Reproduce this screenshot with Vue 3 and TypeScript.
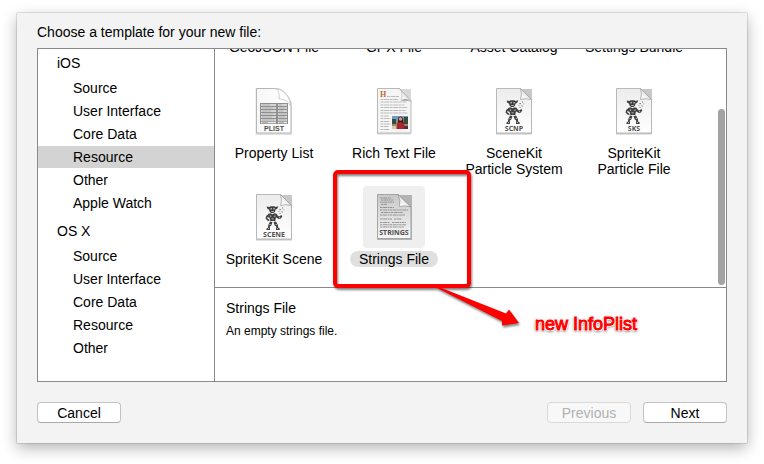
<script setup lang="ts">
import { computed, ref } from 'vue'

type IconKind = 'plain' | 'plist' | 'rtf' | 'figure' | 'strings'

interface Template {
  name: string
  kind: IconKind
  tag?: string
}

const groups = [
  { title: 'iOS', items: ['Source', 'User Interface', 'Core Data', 'Resource', 'Other', 'Apple Watch'] },
  { title: 'OS X', items: ['Source', 'User Interface', 'Core Data', 'Resource', 'Other'] },
]

const templates: Template[] = [
  { name: 'GeoJSON File', kind: 'plain' },
  { name: 'GPX File', kind: 'plain' },
  { name: 'Asset Catalog', kind: 'plain' },
  { name: 'Settings Bundle', kind: 'plain' },
  { name: 'Property List', kind: 'plist', tag: 'PLIST' },
  { name: 'Rich Text File', kind: 'rtf' },
  { name: 'SceneKit\nParticle System', kind: 'figure', tag: 'SCNP' },
  { name: 'SpriteKit\nParticle File', kind: 'figure', tag: 'SKS' },
  { name: 'SpriteKit Scene', kind: 'figure', tag: 'SCENE' },
  { name: 'Strings File', kind: 'strings', tag: 'STRINGS' },
]

const descriptions: Record<string, string> = {
  'Strings File': 'An empty strings file.',
}

const category = ref('iOS/Resource')
const selected = ref('Strings File')
const description = computed(() => descriptions[selected.value] ?? '')
</script>

<template>
  <main class="screen">
    <section class="dialog">
      <h1 class="heading">Choose a template for your new file:</h1>

      <div class="panel">
        <nav class="sidebar">
          <div v-for="group in groups" :key="group.title" class="group">
            <h2 class="group-title">{{ group.title }}</h2>
            <button
              v-for="item in group.items"
              :key="item"
              type="button"
              class="category"
              :class="{ active: category === group.title + '/' + item }"
              @click="category = group.title + '/' + item"
            >{{ item }}</button>
          </div>
        </nav>

        <div class="content">
          <div class="browser">
            <div class="grid">
              <button
                v-for="t in templates"
                :key="t.name"
                type="button"
                class="template"
                :class="{ selected: selected === t.name }"
                @click="selected = t.name"
              >
                <svg class="icon" viewBox="0 0 62 62" aria-hidden="true">
                  <defs>
                    <linearGradient id="paper" x1="0" y1="0" x2="0" y2="1">
                      <stop offset="0" stop-color="#ececec" />
                      <stop offset="1" stop-color="#ffffff" />
                    </linearGradient>
                    <linearGradient id="white" x1="0" y1="0" x2="1" y2="0">
                      <stop offset="0" stop-color="#f7f7f7" />
                      <stop offset="1" stop-color="#ffffff" />
                    </linearGradient>
                    <linearGradient id="gray" x1="0" y1="0" x2="0" y2="1">
                      <stop offset="0" stop-color="#c8c8c8" />
                      <stop offset="1" stop-color="#f6f6f6" />
                    </linearGradient>
                    <linearGradient id="fold" x1="0" y1="1" x2="1" y2="0">
                      <stop offset="0" stop-color="#ffffff" />
                      <stop offset="0.4" stop-color="#f0f0f0" />
                      <stop offset="1" stop-color="#9a9a9a" />
                    </linearGradient>
                  </defs>

                  <template v-if="t.kind === 'plist'">
                    <path d="M13.500 9h22q8 3 12.500 14v31h-34.500z" fill="none" stroke="#000" stroke-opacity=".12" stroke-width="2" />
                    <path d="M13.500 8.500h18c8 0 16.500 9 16.500 18v26.500h-34.500z" fill="url(#white)" stroke="#b5b5b5" />
                    <path d="M33 8.500q4 3 3 10.500 8-.5 11.500 7c0-9-7-16.500-14.500-17.500z" fill="#fdfdfd" stroke="#c4c4c4" stroke-width=".8" />
                    <rect x="17" y="23" width="28" height="21" fill="#8f8f8f" />
                    <path d="M18 25h15M35 25h9M18 28h15M35 28h9M18 31h15M35 31h9M18 34h15M35 34h9M18 37h15M35 37h9M18 40h15M35 40h9M18 42.500h15M35 42.500h9" stroke="#ececec" stroke-width="1.700" />
                    <path d="M19 25h8M36 25h3M19 28h11M36 28h6M19 31h9M36 31h4M19 34h11M36 34h7M19 37h10M36 37h6M19 40h12M36 40h7M19 42.500h6M36 42.500h5" stroke="#aaa" stroke-width=".8" />
                    <text x="31" y="51" class="tag tag-sans">{{ t.tag }}</text>
                  </template>

                  <template v-else-if="t.kind === 'rtf'">
                    <rect x="14" y="9" width="34" height="45.500" fill="#000" opacity=".15" />
                    <path d="M14.500 8.500h22l11.500 12v32.500h-33.500z" fill="#f5f5f5" stroke="#b8b8b8" />
                    <path d="M36.500 8.500c3 4 3 8 1.500 12q5-1.500 10 1z" fill="url(#fold)" stroke="#aaa" stroke-width=".5" />
                    <path d="M38 20.500q4-2.500 9 0z" fill="#444" opacity=".55" />
                    <text x="17" y="17" class="initial">H</text>
                    <path d="M24 16.500h12M17.500 19.500h18M17.500 22h26M17.500 25h24M17.500 27.500h27M17.500 30.500h25M17.500 33h27M17.500 36h8M17.500 38.500h10M17.500 41.500h9M17.500 44h10M17.500 46.500h8M17.500 49.500h9" stroke="#b4b4b4" stroke-width=".9" stroke-dasharray="3 .6 5 .5" />
                    <rect x="29" y="36" width="16" height="13" fill="#6f9bc9" />
                    <path d="M29 41h16v8h-16z" fill="#8c9072" />
                    <path d="M29 39h4v5h-4zM41 37h4v7h-4z" fill="#3a4b3c" />
                    <path d="M35 38q2.500-3 5 0l1 8h-6z" fill="#352019" />
                    <circle cx="37.500" cy="39" r="1.800" fill="#d99a77" />
                    <path d="M34 43l3-1 4 1 1 6h-8z" fill="#ad2431" />
                    <path d="M29 46h4v3h-4z" fill="#e7c3a3" />
                    <path d="M41 46h4v3h-4z" fill="#5b2e31" />
                  </template>

                  <template v-else-if="t.kind === 'figure'">
                    <rect x="13" y="9" width="36" height="45.500" fill="#000" opacity=".22" />
                    <path d="M13.500 8.500h24l11 11v33.500h-35z" fill="url(#paper)" stroke="#b8b8b8" />
                    <path d="M37.500 8.500q2 6 0 11 5-1.500 11 0z" fill="url(#fold)" stroke="#999" stroke-width=".7" />
                    <g fill="#404040">
                      <path d="M23.500 20.500l3 .5 1-.8h4l1 .8 3-.8-1.500 2.800-1.500.6-.5 2.200-1.500 1.200h-2.400l-1.500-1.200-.6-2.200-1.500-.6z" />
                      <path d="M25 28l2.500-.7 2 1 2-1 2.500.8.5 3-1.500.5-.7 3.400h-5l-.8-3.300-2-.5z" />
                      <path d="M33.500 28.500l2.500 2 2.500-1.500.8 1.200-1.300 2.300-2.500.5-2.500-2zM25.500 28.500l-2.300 1.300-.7 2.700 2.500 2.500h1.500l-.5-1.500-1.500-1.300z" />
                      <path d="M27 35.500l2.500.5-1.200 3.500-1.500 1 .2 3.500h-3.500v-1.500l1.500-1 .2-2.300zM33 35.500l-2.500.5 1.200 3.500 1.500 1-.2 3.500h3.700v-1.500l-1.500-1-.2-2.300z" />
                    </g>
                    <path d="M36.500 23h1.200v1.200h-1.200zM39 21.500h1v1h-1zM38.500 25.500h1.200v1h-1.200zM36.500 27h1v1h-1zM35.500 25h.8v.8h-.8zM40.500 23.500h.8v.8h-.8z" fill="#666" />
                    <path d="M27.500 22.300h1.500v1h-1.500zM30.300 22.300h1.500v1h-1.500zM28.300 25h2.500v.7h-2.500zM26.500 29.300l2 .7-1 1zM30.500 30.200l2-1v1.500zM28.500 32.500h2.200v.8h-2.200zM24 31.200h1v1h-1zM36 31h1.200v.8h-1.200zM26.500 38h1v1h-1zM32.700 38h1v1h-1zM25 42h1v.8h-1zM34 42h1v.8h-1z" fill="#ddd" />
                    <text x="31" y="51" class="tag">{{ t.tag }}</text>
                  </template>

                  <template v-else-if="t.kind === 'strings'">
                    <rect x="14" y="9" width="35" height="45" fill="#000" opacity=".25" />
                    <path d="M14.500 8.500h20.500l13 12.500v31.500h-33.500z" fill="url(#gray)" stroke="#a4a4a4" />
                    <path d="M35 8.500q3 6 1.500 12 5-1.500 11.500.5z" fill="url(#fold)" stroke="#888" stroke-width=".6" />
                    <path d="M17 12h11M18 14h13M17 16.200h14M18 18.500h6M17 21.500h14M17 24h28M18 26.500h22M17 29h25M17 33h12M31 33h8M17 36.500h10M29 36.500h14M17 38.800h26M17 41h24" stroke="#8c8c8c" stroke-width=".9" stroke-dasharray="2.500 .6 4 .5 1.500 .5" />
                    <text x="31" y="49" class="tag">{{ t.tag }}</text>
                  </template>
                </svg>
                <span class="label">{{ t.name }}</span>
              </button>
            </div>
            <div class="thumb"></div>
          </div>

          <div class="details">
            <h2 class="details-title">{{ selected }}</h2>
            <p class="details-text">{{ description }}</p>
          </div>
        </div>

        <div class="callout">
          <svg class="callout-shapes" viewBox="0 0 200 180" aria-hidden="true">
            <rect x="7" y="7" width="134" height="114" rx="3" fill="none" stroke="#fe0000" stroke-width="4" />
            <path d="M106 120q-4-1 1 2l67 34v4.500l17-2.500-10-13.500-3 4z" fill="#fe0000" />
          </svg>
          <span class="callout-text">new InfoPlist</span>
        </div>
      </div>

      <footer class="actions">
        <button type="button" class="push">Cancel</button>
        <span class="spacer"></span>
        <button type="button" class="push" disabled>Previous</button>
        <button type="button" class="push">Next</button>
      </footer>
    </section>
  </main>
</template>

<style>
body {
  margin: 0;
  background: #fff;
}
</style>

<style scoped>
.screen {
  box-sizing: border-box;
  display: flex;
  min-height: 100vh;
  padding: 13px 17px 21px;
  overflow: hidden;
  font-family: "Liberation Sans", Arial, sans-serif;
  font-size: 14px;
  line-height: 16px;
  color: #000;
}

.dialog {
  box-sizing: border-box;
  display: flex;
  flex: 1;
  flex-direction: column;
  padding: 11px 20px 20px;
  background: #f3f3f3;
  box-shadow: 0 0 1px rgba(0, 0, 0, 0.6), 0 5px 14px rgba(0, 0, 0, 0.3);
}

.heading,
.group-title,
.details-title {
  margin: 0;
  font-size: 14px;
  font-weight: 400;
}

.heading {
  margin-bottom: 8px;
}

.panel {
  position: relative;
  display: flex;
  flex: 1;
  border: 1px solid #8a8a8a;
  background: #fff;
}

.sidebar {
  box-sizing: border-box;
  display: flex;
  flex: 0 0 177px;
  flex-direction: column;
  gap: 6px;
  padding-top: 3px;
  border-right: 1px solid #8a8a8a;
}

.group {
  display: flex;
  flex-direction: column;
  gap: 1px;
}

.group-title {
  margin-bottom: 2px;
  padding-left: 19px;
  line-height: 22px;
}

.category {
  padding: 0 0 0 35px;
  border: 0;
  background: none;
  color: inherit;
  font: inherit;
  line-height: 22px;
  text-align: left;
}

.category.active {
  background: #d3d3d3;
}

.content {
  display: flex;
  flex: 1;
  flex-direction: column;
  min-width: 0;
}

.browser {
  position: relative;
  display: flex;
  flex: 1 1 0;
  flex-direction: column;
  justify-content: flex-end;
  min-height: 0;
  padding-bottom: 4px;
  overflow: hidden;
}

.grid {
  display: grid;
  grid-template-columns: repeat(4, 120px);
  grid-auto-rows: 97px;
  row-gap: 9px;
}

.template {
  display: flex;
  flex-direction: column;
  align-items: center;
  gap: 3px;
  padding: 0 2px 0 0;
  border: 0;
  background: none;
  color: inherit;
  font: inherit;
}

.icon {
  flex: none;
  width: 62px;
  height: 62px;
  border-radius: 4px;
}

.label {
  padding: 0 9px;
  border-radius: 9px;
  white-space: pre-line;
}

.selected .icon {
  background: #efefef;
}

.selected .label {
  background: #dfdfdf;
}

.tag {
  fill: #505050;
  font-family: "Open Sans", sans-serif;
  font-size: 7px;
  font-weight: 700;
  text-anchor: middle;
}

.tag-sans {
  font-family: "Liberation Sans", sans-serif;
}

.initial {
  fill: #c06a2c;
  font-family: "Liberation Serif", serif;
  font-size: 8px;
  font-weight: 700;
}

.thumb {
  position: absolute;
  top: 60px;
  right: 1px;
  bottom: 2px;
  width: 7px;
  border-radius: 4px;
  background: #a3a3a3;
}

.details {
  box-sizing: border-box;
  flex: 0 0 94px;
  padding: 12px 11px;
  border-top: 1px solid #8a8a8a;
}

.details-text {
  margin: 7px 0 0;
  font-size: 12px;
}

.callout {
  position: absolute;
  top: 116px;
  left: 290px;
  display: flex;
  align-items: flex-end;
  gap: 7px;
  pointer-events: none;
}

.callout-shapes {
  width: 200px;
  height: 180px;
  filter: drop-shadow(1px 2px 1px rgba(0, 0, 0, 0.5));
}

.callout-text {
  padding-bottom: 11px;
  color: #fe0000;
  font-size: 18px;
  line-height: 20px;
  white-space: nowrap;
  -webkit-text-stroke: 1px #fe0000;
  text-shadow:
    1px 0 #fff, -1px 0 #fff, 0 1px #fff, 0 -1px #fff,
    1px 1px #fff, -1px 1px #fff, 1px -1px #fff, -1px -1px #fff,
    0 1px 3px #555, 0 1px 3px #777;
}

.actions {
  display: flex;
  gap: 12px;
  padding-top: 20px;
}

.spacer {
  flex: 1;
}

.push {
  box-sizing: border-box;
  width: 84px;
  height: 21px;
  padding: 0;
  border: 1px solid #c3c3c3;
  border-bottom-color: #a9a9a9;
  border-radius: 4px;
  background: #fff;
  color: #000;
  font: inherit;
  line-height: 18px;
}

.push:disabled {
  border-color: #d9d9d9;
  background: #f8f8f8;
  color: #b0b0b0;
}
</style>
